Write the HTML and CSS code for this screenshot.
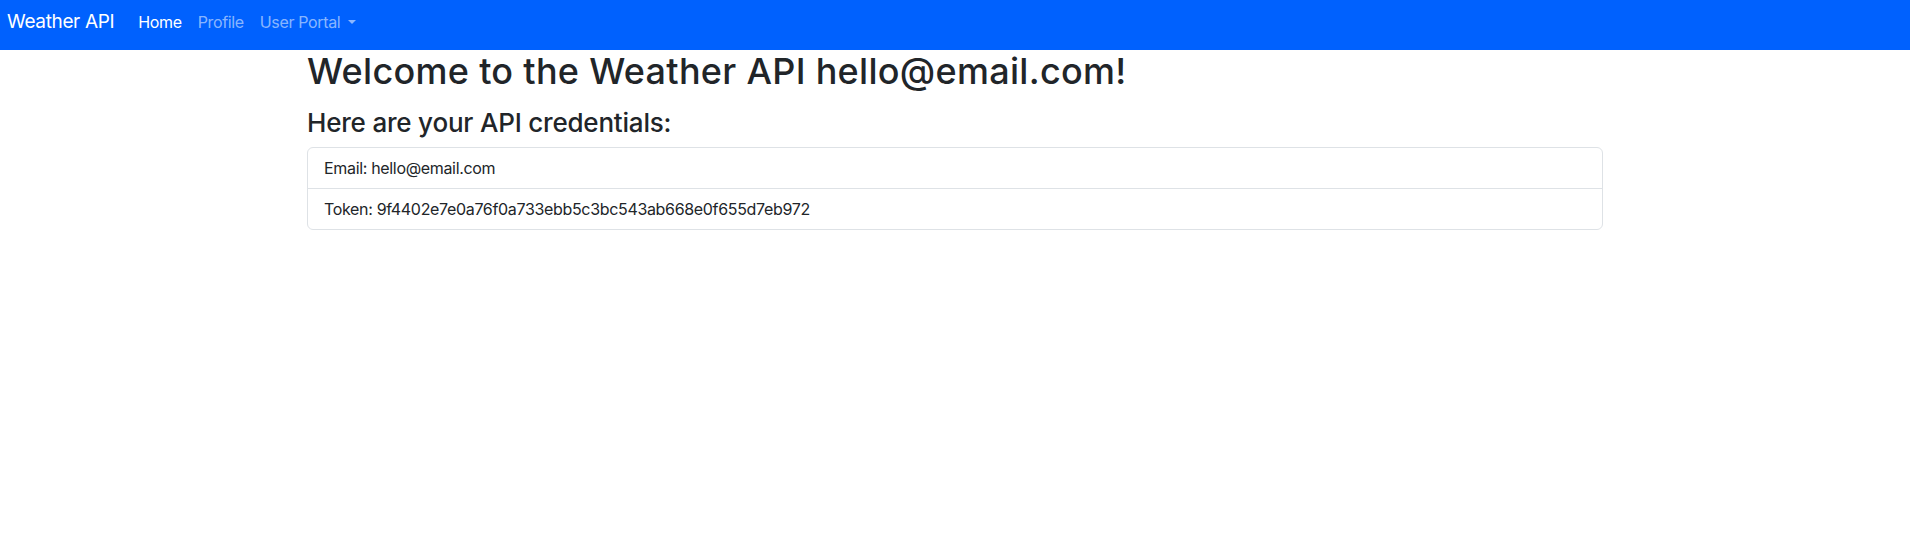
FILE: index.html
```html
<!DOCTYPE html>
<html lang="en">
<head>
<meta charset="utf-8">
<title>Weather API</title>
<link rel="stylesheet" href="styles.css">
</head>
<body>
<nav class="navbar">
  <a class="brand" href="#">Weather API</a>
  <ul class="nav">
    <li><a class="nav-link active" href="#">Home</a></li>
    <li><a class="nav-link" href="#">Profile</a></li>
    <li><a class="nav-link dropdown-toggle" href="#">User Portal</a></li>
  </ul>
</nav>
<main class="container">
  <h1 class="title">Welcome to the Weather API hello@email.com!</h1>
  <h2 class="subtitle">Here are your API credentials:</h2>
  <ul class="list-group">
    <li class="list-item">Email: hello@email.com</li>
    <li class="list-item">Token: 9f4402e7e0a76f0a733ebb5c3bc543ab668e0f655d7eb972</li>
  </ul>
</main>
</body>
</html>
```
FILE: styles.css
```css
* { box-sizing: border-box; }
body {
  margin: 0;
  font-family: Inter, "Noto Sans", "Liberation Sans", sans-serif;
  font-size: 16px;
  line-height: 1.5;
  color: #212529;
  background: #fff;
}
a { text-decoration: none; }
.navbar {
  height: 50px;
  background: #0061fe;
  display: flex;
  align-items: center;
  padding: 0 0 6px 7px;
}
.brand {
  color: #fff;
  font-size: 19px;
  line-height: 30px;
  margin-right: 16px;
  letter-spacing: -0.35px;
}
.nav {
  list-style: none;
  margin: 0;
  padding: 0;
  display: flex;
}
.nav-link {
  display: block;
  padding: 0 8px;
  font-size: 16px;
  line-height: 24px;
  color: rgba(255, 255, 255, 0.55);
  letter-spacing: -0.35px;
}
.nav-link.active { color: #fff; }
.dropdown-toggle::after {
  content: "";
  display: inline-block;
  margin-left: 8px;
  vertical-align: 4px;
  border-top: 4.8px solid;
  border-left: 4.8px solid transparent;
  border-right: 4.8px solid transparent;
}
.container {
  max-width: 1320px;
  margin: 0 auto;
  padding: 0 12px;
}
.title {
  margin: 0 0 15px;
  font-size: 36px;
  font-weight: 500;
  line-height: 42px;
  letter-spacing: 0.3px;
}
.subtitle {
  margin: 0 0 9px;
  font-size: 26px;
  font-weight: 500;
  line-height: 1.2;
  letter-spacing: -0.2px;
}
.list-group {
  list-style: none;
  margin: 0;
  padding: 0;
  border: 1px solid #dee2e6;
  border-radius: 6px;
}
.list-item {
  padding: 8px 16px;
  line-height: 24px;
  font-size: 16px;
  letter-spacing: -0.33px;
}
.list-item + .list-item { border-top: 1px solid #dee2e6; }
```
